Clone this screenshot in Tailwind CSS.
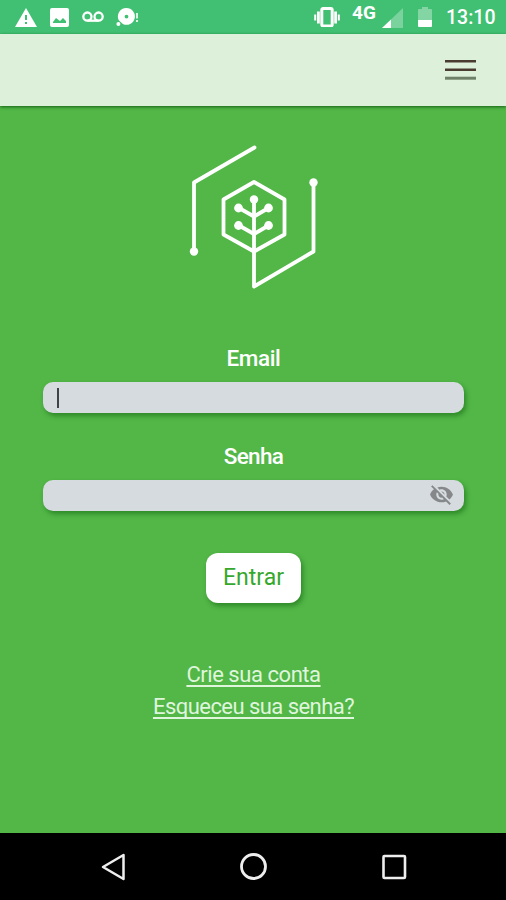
<!DOCTYPE html>
<html lang="pt-BR">
<head>
    <meta charset="UTF-8">
    <meta name="viewport" content="width=device-width, initial-scale=1.0">
    <title>Entrar</title>
    <script src="https://cdn.jsdelivr.net/npm/@tailwindcss/browser@4"></script>
</head>
<body class="bg-[#52b747] font-['Roboto',sans-serif]">
    <div class="h-[900px] flex flex-col overflow-hidden">
        <!-- Status bar -->
        <div class="h-[34px] shrink-0 bg-[#41c073] text-white flex items-start justify-between pl-[15px] pr-[11px]">
            <div class="flex items-start pt-[7px]">
                <svg class="w-[22px] h-5" viewBox="0 0 22 20" fill="currentColor"><path fill-rule="evenodd" d="M11 1 22 20H0ZM10 8v5h2V8Zm0 7v2h2v-2Z"/></svg>
                <svg class="w-[19px] h-5 ml-[13px]" viewBox="0 0 19 20" fill="currentColor"><path fill-rule="evenodd" d="M2 1h15a2 2 0 0 1 2 2v15a2 2 0 0 1-2 2H2a2 2 0 0 1-2-2V3a2 2 0 0 1 2-2ZM3 16h13v-2l-3-3-3 3-4-3-3 4Z"/></svg>
                <svg class="w-[22px] h-5 ml-[13px]" viewBox="0 0 22 20" fill="none" stroke="currentColor" stroke-width="2.3"><circle cx="5.4" cy="9.6" r="4.1"/><circle cx="16.6" cy="9.6" r="4.1"/><path d="M5.4 13.7h11.2"/></svg>
                <svg class="w-[23px] h-5 ml-3" viewBox="0 0 23 20" fill="currentColor"><circle cx="2.4" cy="17" r="2"/><path fill-rule="evenodd" d="M10.500 1a8.400 8.400 0 1 1-3.600 16L3 13.500A8.400 8.400 0 0 1 10.500 1Zm0 6.700a1.900 1.900 0 1 0 0 3.800 1.900 1.900 0 1 0 0-3.800Z"/><path d="M20.200 6h1.600v5.500h-1.600zM20.200 13h1.600v2h-1.600z"/></svg>
            </div>
            <div class="flex items-start">
                <svg class="w-[26px] h-5 mt-[7px]" viewBox="0 0 26 20" fill="none" stroke="currentColor"><rect x="7.800" y="1.500" width="10.400" height="17.500" rx="1.500" stroke-width="3"/><path d="M4.400 4.500v12M21.600 4.500v12" stroke-width="2.800"/><path d="M1.200 7.500v6M24.800 7.500v6" stroke-width="2"/></svg>
                <span class="w-[25px] ml-3 mt-[3px] text-[19px] leading-5 font-bold">4G</span>
                <svg class="w-[21px] h-5 ml-[5px] mt-2" viewBox="0 0 21 20" fill="currentColor"><path d="M21 0v20H0Z" opacity=".3"/><path d="M9 11.500V20H0Z"/></svg>
                <svg class="w-[14px] h-5 ml-[15px] mt-[7px]" viewBox="0 0 14 20" fill="currentColor"><path d="M4 0h6v2h3q1 0 1 1v10H0V3q0-1 1-1h3Z" opacity=".35"/><path d="M0 13h14v6q0 1-1 1H1q-1 0-1-1Z"/></svg>
                <span class="w-[49px] ml-[14px] mt-[6px] text-[19.5px] leading-6 font-medium whitespace-nowrap">13:10</span>
            </div>
        </div>

        <!-- App header -->
        <header class="h-[72px] shrink-0 bg-[#ddf0da] flex items-center justify-end pr-[30px] shadow-[0_1px_3px_rgba(0,70,0,0.75)]">
            <button class="w-[31px]" aria-label="Menu">
                <svg class="w-[31px] h-5" viewBox="0 0 31 20" fill="none" stroke-width="2.4"><path d="M0 1.300h31M0 9.700h31" stroke="#4a3b31"/><path d="M0 18.200h31" stroke="#6f8068" stroke-width="3"/></svg>
            </button>
        </header>

        <!-- Login -->
        <main class="flex-1 flex flex-col items-center pl-px">
            <svg class="w-[150px] h-[165px] mt-[29px] ml-[3px] shrink-0" viewBox="0 0 150 165" fill="none" stroke="#fff" stroke-width="3.8" stroke-linecap="round" stroke-linejoin="round">
                <path d="M74.500 12.500 14 47.500V116M133.500 48V116.500L74 151.500V66"/>
                <path d="m74 47 30.500 17.500v35L74 116.500l-30.500-17v-35Z"/>
                <path d="m59 73 15 8.500L88.500 73M59 90.500l15 8.500 14.500-8.500"/>
                <g fill="#fff" stroke="none">
                    <circle cx="14" cy="116.500" r="4.200"/>
                    <circle cx="133.500" cy="47.500" r="4.200"/>
                    <circle cx="74" cy="64.500" r="4.200"/>
                    <circle cx="58.500" cy="73" r="4.400"/>
                    <circle cx="88.500" cy="73" r="4.400"/>
                    <circle cx="58.500" cy="90.500" r="4.400"/>
                    <circle cx="88.500" cy="90.500" r="4.400"/>
                </g>
            </svg>

            <form class="w-[421px] flex flex-col items-center">
                <label class="mt-[44px] h-7 text-[22.500px] leading-7 font-medium tracking-[-0.400px] text-white">Email</label>
                <div class="mt-[10px] w-full h-[31px] rounded-[10px] bg-[#d6dbdf] shadow-[2px_3px_5px_rgba(0,80,0,0.45)] flex items-center pl-[14px]">
                    <span class="w-[1.5px] h-5 bg-[#3f4347]"></span>
                </div>
                <label class="mt-[29px] h-7 text-[22.500px] leading-7 font-medium tracking-[-0.700px] text-white">Senha</label>
                <div class="mt-[10px] w-full h-[31px] rounded-[10px] bg-[#d6dbdf] shadow-[2px_3px_5px_rgba(0,80,0,0.45)] flex items-center justify-end pr-[10px]">
                    <svg class="w-[25px] h-[25px] mb-[2px]" viewBox="0 0 24 24" fill="#858789"><path d="M12 7c2.760 0 5 2.240 5 5 0 .65-.13 1.260-.36 1.830l2.920 2.920c1.510-1.260 2.700-2.890 3.430-4.750-1.730-4.390-6-7.500-11-7.500-1.400 0-2.740.25-3.980.7l2.160 2.160C10.740 7.130 11.350 7 12 7zM2 4.270l2.280 2.280.46.46C3.080 8.300 1.780 10.020 1 12c1.730 4.390 6 7.500 11 7.500 1.550 0 3.030-.3 4.380-.84l.42.42L19.730 22 21 20.730 3.270 3 2 4.270zM7.530 9.800l1.550 1.550c-.05.21-.08.43-.08.65 0 1.660 1.340 3 3 3 .22 0 .44-.03.65-.08l1.550 1.550c-.67.33-1.410.53-2.200.53-2.760 0-5-2.240-5-5 0-.79.2-1.530.53-2.200zm4.310-.78l3.150 3.150.02-.16c0-1.660-1.340-3-3-3l-.17.01z"/></svg>
                </div>
                <button type="button" class="mt-[42px] w-[95px] h-[50px] rounded-xl bg-white text-[#36a82c] text-[23px] shadow-[2px_3px_5px_rgba(0,80,0,0.45)]">Entrar</button>
            </form>

            <div class="mt-14 flex flex-col items-center text-[22px] leading-8 text-[#dff5dc]">
                <a href="#" class="tracking-[-0.450px] underline decoration-2 underline-offset-3 [text-decoration-skip-ink:none]">Crie sua conta</a>
                <a href="#" class="tracking-[-0.550px] underline decoration-2 underline-offset-3 [text-decoration-skip-ink:none]">Esqueceu sua senha?</a>
            </div>
        </main>

        <!-- Navigation bar -->
        <nav class="h-[67px] shrink-0 bg-black flex items-center justify-between pl-[100px] pr-[98px]">
            <svg class="w-7 h-7" viewBox="0 0 28 28" fill="none" stroke="#eee" stroke-width="2.500" stroke-linejoin="round"><path d="M23.500 2v24L3 14Z"/></svg>
            <svg class="w-7 h-7" viewBox="0 0 28 28" fill="none" stroke="#eee" stroke-width="2.800"><circle cx="13.500" cy="13.500" r="12"/></svg>
            <svg class="w-7 h-7" viewBox="0 0 28 28" fill="none" stroke="#eee" stroke-width="2.600"><rect x="3.500" y="3" width="21.500" height="22" rx="1"/></svg>
        </nav>
    </div>
</body>
</html>
